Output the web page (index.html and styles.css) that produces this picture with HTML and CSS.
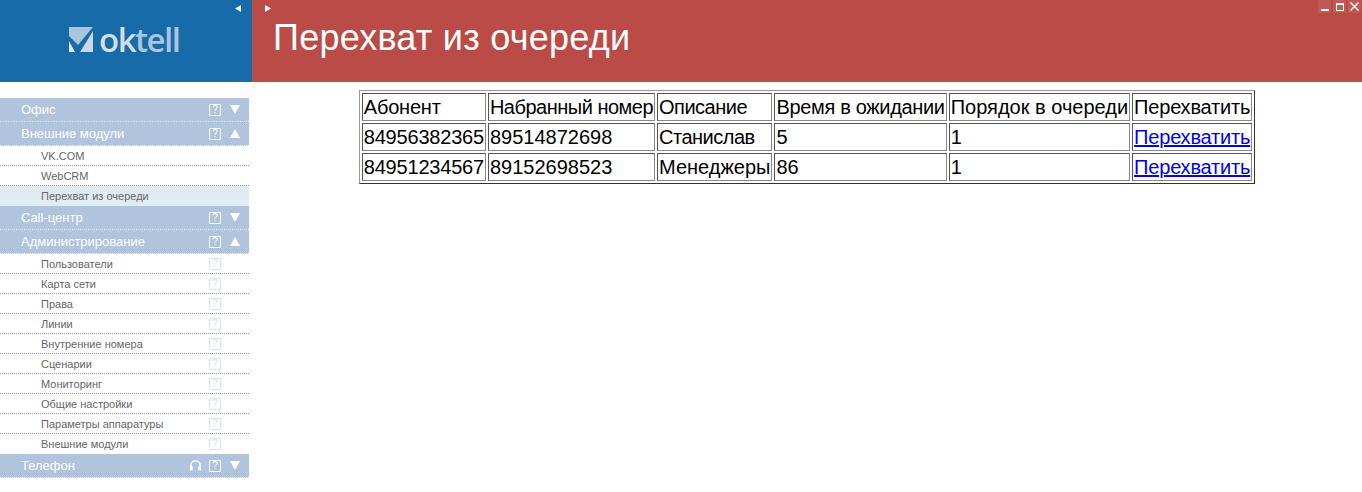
FILE: index.html
```html
<!DOCTYPE html>
<html lang="en">
<head>
  <meta charset="UTF-8">
  <title>Перехват из очереди</title>
  <link rel="stylesheet" href="styles.css">
</head>
<body>
  <header class="top">
    <div class="brand">
      <svg class="arrow-left" width="6" height="7" viewBox="0 0 6 7"><path d="M6 0V7L0 3.5Z" fill="#fff"/></svg>
      <div class="logo">
        <svg width="24" height="25" viewBox="0 0 24 25">
          <path d="M0 0H24L9 18L0 9Z" fill="#a9c6de"/>
          <path d="M24 4V25H11Z" fill="#c9d8e4"/>
          <path d="M0 14L6 25H0Z" fill="#e3ebf1"/>
        </svg>
        <span class="logo-text">ok<b>tell</b></span>
      </div>
    </div>
    <div class="title-bar">
      <svg class="arrow-right" width="6" height="7" viewBox="0 0 6 7"><path d="M0 0V7L6 3.5Z" fill="#fff"/></svg>
      <h1>Перехват из очереди</h1>
      <div class="win-buttons">
        <span class="win-btn"><svg width="13" height="13" viewBox="0 0 13 13"><rect x="3" y="9" width="8" height="2" fill="#fff"/></svg></span>
        <span class="win-btn"><svg width="13" height="13" viewBox="0 0 13 13"><rect x="3.5" y="3.5" width="7" height="7" fill="none" stroke="#fff"/><rect x="3" y="3" width="8" height="2" fill="#fff"/></svg></span>
        <span class="win-btn"><svg width="13" height="13" viewBox="0 0 13 13"><path d="M2.5 2.5L10.5 10.5M10.5 2.5L2.5 10.5" stroke="#fff" stroke-width="1.4"/></svg></span>
      </div>
    </div>
  </header>

  <div class="page">
    <nav class="sidebar">
      <div class="group"><span>Офис</span><i class="help">?</i><i class="tri down"></i></div>
      <div class="group"><span>Внешние модули</span><i class="help">?</i><i class="tri up"></i></div>
      <a class="sub">VK.COM</a>
      <a class="sub">WebCRM</a>
      <a class="sub current">Перехват из очереди</a>
      <div class="group"><span>Call-центр</span><i class="help">?</i><i class="tri down"></i></div>
      <div class="group"><span>Администрирование</span><i class="help">?</i><i class="tri up"></i></div>
      <a class="sub"><span>Пользователи</span><i class="help">?</i></a>
      <a class="sub"><span>Карта сети</span><i class="help">?</i></a>
      <a class="sub"><span>Права</span><i class="help">?</i></a>
      <a class="sub"><span>Линии</span><i class="help">?</i></a>
      <a class="sub"><span>Внутренние номера</span><i class="help">?</i></a>
      <a class="sub"><span>Сценарии</span><i class="help">?</i></a>
      <a class="sub"><span>Мониторинг</span><i class="help">?</i></a>
      <a class="sub"><span>Общие настройки</span><i class="help">?</i></a>
      <a class="sub"><span>Параметры аппаратуры</span><i class="help">?</i></a>
      <a class="sub last"><span>Внешние модули</span><i class="help">?</i></a>
      <div class="group">
        <span>Телефон</span>
        <svg class="phones" width="13" height="13" viewBox="0 0 14 13">
          <path d="M2 8V6.5a5 5 0 0 1 10 0V8" fill="none" stroke="#fff" stroke-width="1.6"/>
          <rect x="1" y="7" width="3" height="5" rx="1" fill="#fff"/>
          <rect x="10" y="7" width="3" height="5" rx="1" fill="#fff"/>
        </svg>
        <i class="help">?</i><i class="tri down"></i>
      </div>
    </nav>

    <main class="content">
      <table class="queue">
        <tr>
          <td class="tight">Абонент</td>
          <td class="tighter">Набранный номер</td>
          <td class="tighter">Описание</td>
          <td class="snug">Время в ожидании</td>
          <td>Порядок в очереди</td>
          <td class="tight">Перехватить</td>
        </tr>
        <tr>
          <td class="tight">84956382365</td>
          <td>89514872698</td>
          <td class="tighter">Станислав</td>
          <td>5</td>
          <td>1</td>
          <td class="tight"><a href="#">Перехватить</a></td>
        </tr>
        <tr>
          <td class="tight">84951234567</td>
          <td>89152698523</td>
          <td>Менеджеры</td>
          <td>86</td>
          <td>1</td>
          <td class="tight"><a href="#">Перехватить</a></td>
        </tr>
      </table>
    </main>
  </div>
</body>
</html>
```

FILE: styles.css
```css
html, body {
  height: 100%;
}
body {
  margin: 0;
  background-color: #fff;
  font-family: "Liberation Sans", Arial, sans-serif;
  overflow: hidden;
}
.top {
  display: flex;
  height: 82px;
}
.brand {
  position: relative;
  flex: 0 0 252px;
  display: flex;
  background-color: #166ba8;
}
.arrow-left {
  position: absolute;
  top: 5px;
  right: 11px;
}
.logo {
  display: flex;
  align-items: flex-start;
  gap: 6px;
  padding: 27px 0 0 69px;
}
.logo-text {
  font-family: "Open Sans", sans-serif;
  font-size: 33px;
  line-height: 25px;
  font-weight: 600;
  letter-spacing: -1.5px;
  color: #d1dfe9;
}
.logo-text b {
  font-weight: 600;
  color: #a9c6de;
}
.title-bar {
  position: relative;
  flex: 1;
  background-color: #bb4b46;
}
.arrow-right {
  position: absolute;
  top: 5px;
  left: 13px;
}
h1 {
  margin: 0;
  padding: 18px 0 0 21px;
  font-size: 36px;
  line-height: 40px;
  letter-spacing: 0.25px;
  font-weight: normal;
  color: #fff;
}
.win-buttons {
  position: absolute;
  top: 0;
  right: 1px;
  display: flex;
  gap: 2px;
}
.win-btn {
  display: block;
  width: 13px;
  height: 13px;
  background-color: #c05a55;
}
.win-btn svg {
  display: block;
}
.page {
  display: flex;
}
.sidebar {
  flex: 0 0 249px;
  padding-top: 16px;
}
.group {
  display: flex;
  align-items: center;
  box-sizing: border-box;
  height: 24px;
  padding-left: 21px;
  border-bottom: 1px dotted #fff;
  background-color: #b0c4de;
  color: #fff;
  font-size: 13px;
}
.group span {
  flex: 1;
}
.sub {
  display: flex;
  align-items: center;
  box-sizing: border-box;
  height: 20px;
  padding-left: 41px;
  border-bottom: 1px dotted #999;
  color: #666;
  font-size: 11px;
}
.sub.last {
  border-bottom: 0;
}
.sub span {
  flex: 1;
}
.sub.current {
  background-color: #e1ebf4;
  border-bottom: 0;
}
.help {
  display: block;
  box-sizing: border-box;
  width: 12px;
  height: 12px;
  border: 1px solid #fff;
  border-radius: 1px;
  color: #fff;
  font-size: 10px;
  line-height: 10px;
  font-style: normal;
  text-align: center;
}
.sub .help {
  margin-right: 28px;
  border-color: #dbe3e8;
  color: #dbe3e8;
}
.tri {
  display: block;
  width: 0;
  height: 0;
  margin: 0 9px 0 9px;
  border-left: 5px solid transparent;
  border-right: 5px solid transparent;
}
.tri.down {
  border-top: 9px solid #fff;
}
.tri.up {
  border-bottom: 9px solid #fff;
}
.phones {
  margin-right: 7px;
}
.content {
  flex: 1;
  display: flex;
  justify-content: center;
  align-items: flex-start;
  padding: 8px 0 0 3px;
}
.queue {
  font-size: 20px;
  border: 1px solid;
  border-color: #999 #333 #333 #999;
}
.queue td {
  height: 28px;
  box-sizing: border-box;
  border: 1px solid;
  border-color: #555 #888 #888 #555;
  white-space: nowrap;
}
.queue .tight {
  letter-spacing: -0.2px;
}
.queue .snug {
  letter-spacing: -0.33px;
}
.queue .tighter {
  letter-spacing: -0.5px;
}
```
